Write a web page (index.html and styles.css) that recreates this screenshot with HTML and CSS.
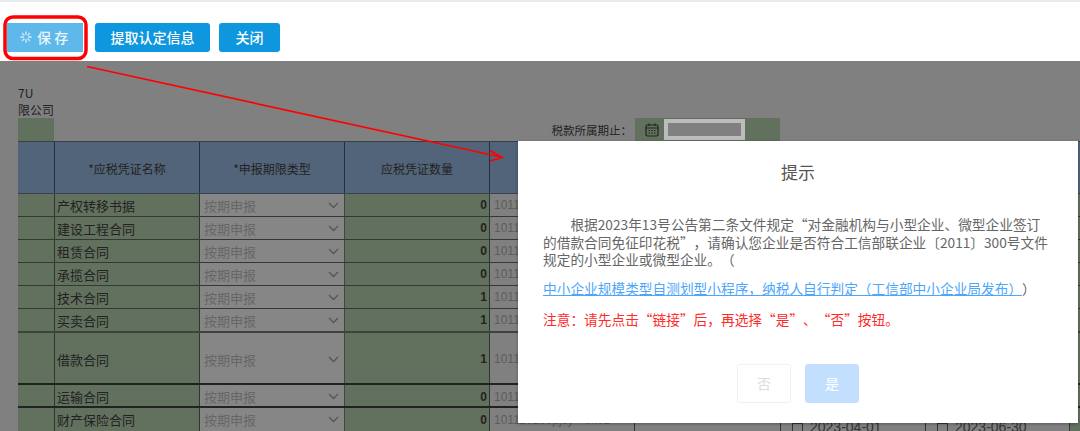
FILE: index.html
```html
<!DOCTYPE html>
<html lang="zh-CN">
<head>
  <meta charset="UTF-8" />
  <title>印花税申报</title>
  <link rel="stylesheet" href="styles.css">
</head>
<body>

<div class="toolbar">
  <button class="btn btn-saving">
    <svg class="spin" width="12" height="12" viewBox="0 0 14 14">
      <g stroke="#d9eefa" stroke-width="1.5" stroke-linecap="round">
        <path d="M7 1v3M7 10v3M1 7h3M10 7h3M2.8 2.8l2 2M9.2 9.2l2 2M2.8 11.2l2-2M9.2 4.8l2-2"/>
      </g>
    </svg>
    保 存
  </button>
  <button class="btn btn-wide">提取认定信息</button>
  <button class="btn btn-close">关闭</button>
</div>

<div class="content">
  <div class="form-head">
    <div class="company">
      <div class="company-text">7U<br>限公司</div>
      <div class="company-box"></div>
    </div>
    <div class="period">
      <span class="period-label">税款所属期止：</span>
      <div class="period-cell">
        <svg width="14" height="14" viewBox="0 0 14 14" fill="none" stroke="#222" stroke-width="1.2">
          <rect x="1" y="2" width="12" height="11" rx="1.5"/>
          <path d="M1 5h12M4 0.5v2.5M10 0.5v2.5"/>
          <path d="M3.5 7.5h7M3.5 10h7" stroke-dasharray="1.6 1.2"/>
        </svg>
        <div class="period-input"></div>
      </div>
    </div>
  </div>

  <div class="sheet">
    <div class="row row-head">
      <div class="cell"></div>
      <div class="cell">*应税凭证名称</div>
      <div class="cell">*申报期限类型</div>
      <div class="cell">应税凭证数量</div>
      <div class="cell"></div><div class="cell"></div><div class="cell"></div><div class="cell"></div><div></div>
    </div>

    <div class="row">
      <div class="cell"></div>
      <div class="cell name">产权转移书据</div>
      <div class="cell pick">按期申报<svg class="chev" width="11" height="7" viewBox="0 0 11 7"><path d="M1 1l4.5 4.5L10 1"/></svg></div>
      <div class="cell num">0</div>
      <div class="cell code">1011</div>
      <div class="cell code"></div><div class="cell code"></div><div class="cell code"></div><div></div>
    </div>
    <div class="row">
      <div class="cell"></div>
      <div class="cell name">建设工程合同</div>
      <div class="cell pick">按期申报<svg class="chev" width="11" height="7" viewBox="0 0 11 7"><path d="M1 1l4.5 4.5L10 1"/></svg></div>
      <div class="cell num">0</div>
      <div class="cell code">1011</div>
      <div class="cell code"></div><div class="cell code"></div><div class="cell code"></div><div></div>
    </div>
    <div class="row">
      <div class="cell"></div>
      <div class="cell name">租赁合同</div>
      <div class="cell pick">按期申报<svg class="chev" width="11" height="7" viewBox="0 0 11 7"><path d="M1 1l4.5 4.5L10 1"/></svg></div>
      <div class="cell num">0</div>
      <div class="cell code">1011</div>
      <div class="cell code"></div><div class="cell code"></div><div class="cell code"></div><div></div>
    </div>
    <div class="row">
      <div class="cell"></div>
      <div class="cell name">承揽合同</div>
      <div class="cell pick">按期申报<svg class="chev" width="11" height="7" viewBox="0 0 11 7"><path d="M1 1l4.5 4.5L10 1"/></svg></div>
      <div class="cell num">0</div>
      <div class="cell code">1011</div>
      <div class="cell code"></div><div class="cell code"></div><div class="cell code"></div><div></div>
    </div>
    <div class="row">
      <div class="cell"></div>
      <div class="cell name">技术合同</div>
      <div class="cell pick">按期申报<svg class="chev" width="11" height="7" viewBox="0 0 11 7"><path d="M1 1l4.5 4.5L10 1"/></svg></div>
      <div class="cell num">1</div>
      <div class="cell code">1011</div>
      <div class="cell code"></div><div class="cell code"></div><div class="cell code"></div><div></div>
    </div>
    <div class="row row-heavy">
      <div class="cell"></div>
      <div class="cell name">买卖合同</div>
      <div class="cell pick">按期申报<svg class="chev" width="11" height="7" viewBox="0 0 11 7"><path d="M1 1l4.5 4.5L10 1"/></svg></div>
      <div class="cell num">1</div>
      <div class="cell code">1011</div>
      <div class="cell code"></div><div class="cell code"></div><div class="cell code"></div><div></div>
    </div>
    <div class="row row-tall">
      <div class="cell"></div>
      <div class="cell name">借款合同</div>
      <div class="cell pick">按期申报<svg class="chev" width="11" height="7" viewBox="0 0 11 7"><path d="M1 1l4.5 4.5L10 1"/></svg></div>
      <div class="cell num">1</div>
      <div class="cell code">1011</div>
      <div class="cell code"></div><div class="cell code"></div><div class="cell code"></div><div></div>
    </div>
    <div class="row row-dark">
      <div class="cell"></div>
      <div class="cell name">运输合同</div>
      <div class="cell pick">按期申报<svg class="chev" width="11" height="7" viewBox="0 0 11 7"><path d="M1 1l4.5 4.5L10 1"/></svg></div>
      <div class="cell num">0</div>
      <div class="cell code">1011</div>
      <div class="cell code"></div><div class="cell code"></div><div class="cell code"></div><div></div>
    </div>
    <div class="row row-last">
      <div class="cell"></div>
      <div class="cell name">财产保险合同</div>
      <div class="cell pick">按期申报<svg class="chev" width="11" height="7" viewBox="0 0 11 7"><path d="M1 1l4.5 4.5L10 1"/></svg></div>
      <div class="cell num">0</div>
      <div class="cell code">101110100pjsy · 0k0z</div>
      <div class="cell code"></div>
      <div class="cell code date"><span class="date-box"></span>2023-04-01</div>
      <div class="cell code date"><span class="date-box"></span>2023-06-30</div>
      <div></div>
    </div>
  </div>
</div>

<div class="dialog">
  <div class="dialog-title">提示</div>
  <p class="dialog-text">根据2023年13号公告第二条文件规定“对金融机构与小型企业、微型企业签订<br>的借款合同免征印花税”，请确认您企业是否符合工信部联企业〔2011〕300号文件<br>规定的小型企业或微型企业。（</p>
  <p class="dialog-link"><a href="#">中小企业规模类型自测划型小程序，纳税人自行判定（工信部中小企业局发布）</a>）</p>
  <p class="dialog-note">注意：请先点击“链接”后，再选择“是”、“否”按钮。</p>
  <div class="dialog-actions">
    <button class="choice choice-no">否</button>
    <button class="choice choice-yes">是</button>
  </div>
</div>

<!-- red marks drawn over the screenshot -->
<svg class="marks" width="1080" height="431" viewBox="0 0 1080 431" fill="none" stroke="#f00">
  <rect x="5" y="17" width="81" height="41.5" rx="8" stroke-width="3.5"/>
  <path d="M87 66.5L501 157" stroke-width="1.7"/>
  <path d="M490 150.5L502 157.5L490 161" stroke-width="1.7"/>
</svg>

</body>
</html>
```

FILE: styles.css
```css
* {
  box-sizing: border-box;
}

html, body {
  margin: 0;
  height: 431px;
  overflow: hidden;
}

body {
  position: relative;
  background: #808080;
  font-family: "Noto Sans CJK SC", "Liberation Sans", sans-serif;
  font-size: 13px;
  color: #222;
  text-spacing-trim: space-all;
}

.toolbar {
  display: flex;
  height: 61px;
  padding: 21px 0 0 7px;
  background: #fff;
  border-top: 2px solid #ebebeb;
}

.btn {
  height: 29px;
  margin-right: 12px;
  padding: 0 0 2px;
  border: none;
  border-radius: 3px;
  background: #0e96de;
  color: #fff;
  font-family: inherit;
  font-size: 14px;
  font-weight: 500;
}

.btn-saving {
  display: flex;
  align-items: center;
  gap: 5px;
  width: 76px;
  padding-left: 13px;
  background: #5eb9ea;
  color: #e8f5fc;
  border-radius: 0;
}

.btn-wide {
  width: 115px;
  margin-right: 9px;
}

.btn-close {
  width: 61px;
}

.form-head {
  display: flex;
  justify-content: space-between;
  height: 80px;
  padding-left: 18px;
  padding-right: 300px;
}

.company {
  width: 36px;
  padding-top: 23px;
  font-size: 12px;
  line-height: 17px;
}

.company-text {
  height: 34px;
  white-space: nowrap;
}

.company-box {
  height: 23px;
  background: #62705e;
}

.period {
  display: flex;
  align-items: flex-end;
  gap: 3px;
}

.period-label {
  font-size: 11.5px;
  line-height: 22px;
  white-space: nowrap;
}

.period-cell {
  display: flex;
  align-items: center;
  gap: 5px;
  width: 145px;
  height: 23px;
  padding-left: 10px;
  background: #62705e;
}

.period-input {
  width: 81px;
  height: 21px;
  background: #808080;
  border: 4px solid #bcbcbc;
}

.sheet {
  padding-left: 18px;
}

.row {
  display: grid;
  grid-template-columns: 37px 145px 145px 145px 145px 146px 145px 144px 10px;
  height: 23px;
  background: #62705e;
  border-bottom: 1px solid #333a33;
}

.row-head {
  height: 53px;
  background: #526479;
  border-top: 1px solid #3a3f45;
  border-bottom-color: #39434f;
  font-size: 12px;
  text-align: center;
}

.row-head .cell {
  justify-content: center;
  padding-top: 2px;
  border-right-color: #28303a;
}

.row-heavy {
  height: 24px;
  border-bottom: 2px solid #3c443a;
}

.row-tall {
  height: 52px;
  border-bottom: 2px solid #222;
}

.row-dark {
  border-bottom: 2px solid #222;
}

.row-tall .cell,
.row-dark .cell {
  padding-top: 2px;
}

.row-last {
  grid-template-rows: 23px;
  border-bottom: none;
}

.cell {
  display: flex;
  align-items: center;
  min-width: 0;
  white-space: nowrap;
  border-right: 1px solid #2f3530;
}

.name {
  padding-left: 2px;
}

.pick {
  justify-content: space-between;
  padding-left: 4px;
  padding-right: 5px;
  background: #868686;
  color: #666;
  border-right-color: #444;
}

.chev {
  fill: none;
  stroke: #555;
  stroke-width: 1.3;
}

.num {
  justify-content: flex-end;
  padding-right: 2px;
  font-family: "Liberation Sans", sans-serif;
  font-weight: 700;
  font-size: 12px;
}

.code {
  padding-left: 4px;
  background: #808080;
  color: #5c5c5c;
  font-family: "Liberation Sans", sans-serif;
  font-size: 12px;
}

.date {
  align-items: flex-start;
  padding: 11px 0 0 11px;
  gap: 7px;
  color: #333;
  font-size: 14px;
}

.date-box {
  width: 11px;
  height: 10px;
  margin-top: 4px;
  flex: none;
  border: 1px solid #333;
}

.dialog {
  position: absolute;
  left: 518px;
  top: 141px;
  width: 560px;
  height: 282px;
  padding: 0 25px;
  background: #fff;
  color: #666;
  font-size: 13.7px;
  line-height: 17.5px;
  box-shadow: 0 1px 3px rgba(0, 0, 0, 0.3);
}

.dialog-title {
  padding-top: 20px;
  text-align: center;
  font-size: 17px;
  line-height: 22px;
  color: #555;
}

.dialog-text {
  margin: 33px 0 0;
  text-indent: 2em;
  white-space: nowrap;
}

.dialog-link {
  margin: 11px 0 0;
  white-space: nowrap;
}

.dialog-link a {
  color: #4ea6fb;
}

.dialog-note {
  margin: 14px 0 0;
  color: #ff2a2a;
  white-space: nowrap;
}

.dialog-actions {
  display: flex;
  justify-content: center;
  gap: 14px;
  margin-top: 35px;
}

.choice {
  width: 54px;
  height: 39px;
  border-radius: 3px;
  font-family: inherit;
  font-size: 14px;
}

.choice-no {
  background: #fff;
  border: 1px solid #eef0f3;
  color: #dcdcdc;
}

.choice-yes {
  background: #c2dffe;
  border: 1px solid #c2dffe;
  color: #fff;
}

.marks {
  position: absolute;
  left: 0;
  top: 0;
  pointer-events: none;
}
```
